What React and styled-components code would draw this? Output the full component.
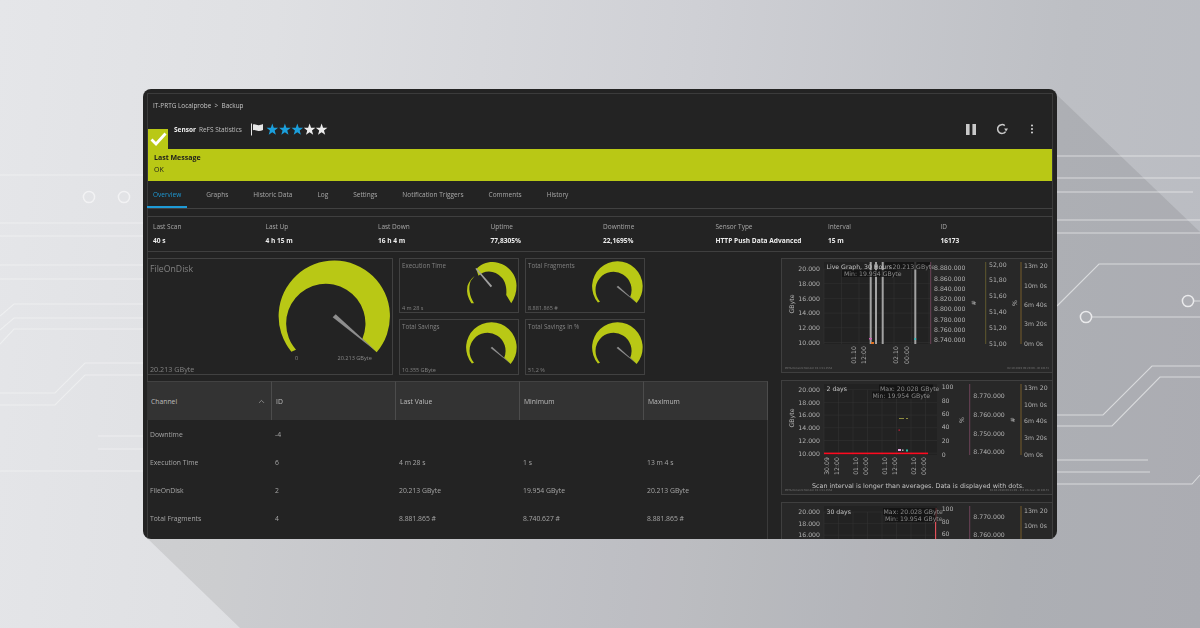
import React from "react";
import styled, { createGlobalStyle } from "styled-components";
import { EllipsisVertical, ChevronUp } from "lucide-react";

const Global = createGlobalStyle`
  html, body { margin: 0; padding: 0; background: #d0d1d5; }
  * { box-sizing: border-box; }
`;

const Stage = styled.div`
  position: relative;
  width: 1200px;
  height: 628px;
  padding: 89px 143px;
  overflow: hidden;
  background: linear-gradient(96deg, #e5e6e9 0%, #dfe0e3 22%, #cfd0d5 55%, #bdbfc4 85%, #babcc2 100%);
  font-family: "Open Sans", "Noto Sans", sans-serif;
`;

const Backdrop = styled.svg`
  position: absolute;
  inset: 0;
`;

const Window = styled.main`
  position: relative;
  width: 914px;
  height: 450px;
  padding: 4px 4px 0;
  overflow: hidden;
  background: #232323;
  border-radius: 8px;
  color: #b5b5b5;
  font-size: 7px;
  filter: blur(0.3px);
`;

const Frame = styled.div`
  width: 906px;
  border: 1px solid #3b3b3b;
  border-bottom: 0;
`;

const Breadcrumb = styled.div`
  height: 22px;
  padding-left: 5px;
  display: flex;
  align-items: center;
  color: #c4c4c4;
  font-size: 6.4px;
`;

const HeaderRow = styled.header`
  display: flex;
  height: 33px;
  align-items: flex-end;
`;

const CheckBadge = styled.div`
  width: 20px;
  height: 20px;
  margin-right: 6px;
  background: #b9c815;
  display: flex;
  align-items: center;
  justify-content: center;
`;

const TitleGroup = styled.div`
  align-self: flex-start;
  height: 26px;
  display: flex;
  align-items: center;
  font-size: 6.5px;
  color: #bdbdbd;
`;

const SensorWord = styled.b`
  color: #f0f0f0;
  margin-right: 3px;
`;

const FlagIcon = styled.svg`
  margin-left: 9px;
  margin-right: 3px;
`;

const Stars = styled.svg`
  display: block;
`;

const Actions = styled.div`
  margin-left: auto;
  align-self: flex-start;
  height: 26px;
  display: flex;
  align-items: center;
  padding-right: 14px;
  color: #c9c9c9;
`;

const PauseIcon = styled.svg`
  margin-right: 20px;
`;

const MoreIcon = styled(EllipsisVertical)`
  margin-left: 18px;
`;

const Banner = styled.section`
  height: 32px;
  padding: 3px 6px 0;
  background: #b9c815;
  color: #1d1d1d;
  line-height: 12px;
  font-size: 7px;
`;

const BannerTitle = styled.div`
  font-weight: 700;
`;

const Tabs = styled.nav`
  height: 28px;
  margin: 0 -1px;
  display: flex;
  gap: 13px;
  border-bottom: 1px solid #414141;
`;

const Tab = styled.div`
  height: 27px;
  padding: 2px 6px 0;
  display: flex;
  align-items: center;
  font-size: 6.5px;
  color: ${(p) => (p.$active ? "#1e9ad6" : "#a9a9a9")};
  border-bottom: 2px solid ${(p) => (p.$active ? "#1e9ad6" : "transparent")};
`;

const Stats = styled.section`
  height: 36px;
  margin: 7px -1px 0;
  padding: 0 5px;
  display: grid;
  grid-template-columns: repeat(8, 112.5px);
  align-content: center;
  border: 1px solid #3f3f3f;
`;

const Stat = styled.div`
  display: flex;
  flex-direction: column;
  gap: 2px;
  line-height: 12px;
`;

const StatLabel = styled.span`
  color: #a8a8a8;
  font-size: 6.5px;
`;

const StatValue = styled.span`
  color: #ececec;
  font-weight: 700;
  font-size: 6.6px;
`;

const Main = styled.div`
  display: flex;
  gap: 13px;
  margin: 6px -1px 0;
`;

const LeftColumn = styled.div`
  width: 621px;
`;

const GaugeRow = styled.div`
  display: flex;
  gap: 6px;
`;

const GaugeGrid = styled.div`
  display: grid;
  grid-template-columns: 120px 120px;
  grid-template-rows: 55px 56px;
  gap: 6px;
`;

const GaugePanel = styled.div`
  width: ${(p) => (p.$big ? "246px" : "120px")};
  height: ${(p) => (p.$big ? "117px" : "auto")};
  border: 1px solid #414141;
  display: flex;
  justify-content: space-between;
  padding: ${(p) => (p.$big ? "1px 1.6px 0 0" : "2px 1.4px 0 0")};
`;

const GaugeText = styled.div`
  display: flex;
  flex-direction: column;
  justify-content: space-between;
  padding: ${(p) => (p.$big ? "3px 0 0 2px" : "0 0 0 2px")};
  color: #828282;
  white-space: nowrap;
`;

const GaugeTitle = styled.span`
  font-size: ${(p) => (p.$big ? "8.7px" : "6.2px")};
  line-height: ${(p) => (p.$big ? "13px" : "10px")};
`;

const GaugeValue = styled.span`
  font-size: ${(p) => (p.$big ? "7.2px" : "5.5px")};
  line-height: ${(p) => (p.$big ? "10px" : "8px")};
`;

const GaugeSvg = styled.svg`
  display: block;
  flex-shrink: 0;
`;

const GaugeLabel = styled.text`
  font-family: "Open Sans", sans-serif;
  font-size: 16.7px;
  fill: #8a8a8a;
  text-anchor: middle;
`;

const Table = styled.div`
  margin-top: 6px;
  display: grid;
  grid-template-columns: 125px 124px 124px 124px 124px;
  grid-template-rows: 39px repeat(4, 28px);
  align-content: start;
  border-right: 1px solid #3a3a3a;
  height: 160px;
`;

const HeadCell = styled.div`
  padding: 0 5px 0 4px;
  display: flex;
  align-items: center;
  justify-content: space-between;
  background: #333333;
  border-top: 1px solid #424242;
  border-right: 1px solid #4c4c4c;
  color: #bdbdbd;
  font-size: 6.8px;
`;

const Cell = styled.div`
  padding: 0 0 0 3px;
  display: flex;
  align-items: center;
  font-size: 6.8px;
  color: #a6a6a6;
`;

const RightColumn = styled.aside`
  width: 272px;
  display: flex;
  flex-direction: column;
  gap: 7px;
`;

const ChartPanel = styled.div`
  height: ${(p) => (p.$clipped ? "37px" : "115px")};
  border: 1px solid #3f3f3f;
  border-bottom-width: ${(p) => (p.$clipped ? "0" : "1px")};
  background: #282828;
  flex-shrink: 0;
  overflow: hidden;
`;

const ChartSvg = styled.svg`
  display: block;
  font-family: "DejaVu Sans", sans-serif;
`;

const AxisText = styled.text`
  font-size: 6.2px;
  fill: #b2b2b2;
  text-anchor: ${(p) => p.$anchor || "start"};
`;

const CaptionText = styled.text`
  font-size: 6.2px;
  fill: #c4c4c4;
`;

const OverlayText = styled.text`
  font-size: 6.2px;
  fill: #8b8b8b;
`;

const FootText = styled.text`
  font-size: 2.6px;
  fill: #777;
  text-anchor: ${(p) => p.$anchor || "start"};
`;

const NoteText = styled.text`
  font-size: 6.4px;
  fill: #c4c4c4;
  text-anchor: middle;
`;

const TRACE = "#f4f5f6";

function BackdropArt() {
  const lines = [
    "M0 175H143", "M0 223H143", "M0 236H143", "M0 265H143", "M0 279H143",
    "M0 316L14 304H143", "M0 330L14 318H143", "M0 344L14 329H143",
    "M0 393H55L85 363H143", "M0 405H55L85 375H143",
    "M98 436H143", "M98 449H143", "M0 471H143",
    "M1057 156H1200", "M1057 178H1200", "M1057 192H1193", "M1057 220H1200", "M1057 233H1200",
    "M1057 306L1099 264H1200", "M1194 301H1200", "M1092 317H1200",
    "M1057 415H1103L1152 366H1200", "M1057 426H1112L1160 377H1200",
    "M1057 460H1148", "M1057 472H1150", "M1057 484H1192L1200 475",
  ];
  return (
    <Backdrop width="1200" height="628" viewBox="0 0 1200 628">
      <polygon points="148,539 240,628 1200,628 1200,232 1057,95" fill="#25262a" opacity="0.1" />
      <g fill="none" stroke={TRACE} strokeOpacity="0.62" strokeWidth="1.1">
        {lines.map((d) => <path key={d} d={d} />)}
        <g strokeWidth="1.5" strokeOpacity="0.85">
          <circle cx="89" cy="197" r="5.6" />
          <circle cx="124" cy="197" r="5.6" />
          <circle cx="1188" cy="301" r="5.6" />
          <circle cx="1086" cy="317" r="5.6" />
        </g>
      </g>
    </Backdrop>
  );
}

function Star({ x, color }) {
  const pts = [];
  for (let i = 0; i < 10; i++) {
    const r = i % 2 ? 2.5 : 6.1;
    const a = (Math.PI / 5) * i - Math.PI / 2;
    pts.push(`${(x + r * Math.cos(a)).toFixed(2)},${(6.7 + r * Math.sin(a)).toFixed(2)}`);
  }
  return <polygon points={pts.join(" ")} fill={color} />;
}

const GAUGE_GREEN = "#b9c815";

function Gauge({ big, min, max, partial }) {
  const w = big ? 116.67 : 53;
  const h = big ? 105.33 : 47.84;
  return (
    <GaugeSvg width={w} height={h} viewBox="0 8 350 316">
      {partial ? (
        <>
          <path fill={GAUGE_GREEN} d="M48 287C25 250 15 215 22 180C24 160 45 125 70 107L44 140C35 165 33 190 37 210C40 240 52 265 66 287Z" />
          <path fill={GAUGE_GREEN} d="M81 62C110 30 150 14 191 15C280 20 347 90 347 170C347 215 335 255 312 287L279 232C285 180 270 140 250 118C225 92 195 78 165 78C135 78 110 92 96 106Z" />
          <polygon fill="#a0a0a0" points="75,60 82,54 186,173 176,181" />
        </>
      ) : (
        <>
          <path fill={GAUGE_GREEN} d="M52 283A167 167 0 1 1 308 285L265 245A119 119 0 1 0 66 277Z" />
          <polygon fill="#8e8e8e" points="176,180 185,171 309,284" />
        </>
      )}
      {min && <GaugeLabel x="68" y="309">{min}</GaugeLabel>}
      {max && <GaugeLabel x="242" y="309">{max}</GaugeLabel>}
    </GaugeSvg>
  );
}

function Grid({ x0, x1, y0, y1, stepX, stepY }) {
  const v = [];
  for (let x = x0; x < x1; x += stepX) v.push(x);
  const h = [];
  for (let y = y0; y < y1; y += stepY) h.push(y);
  return (
    <g stroke="#343434" strokeWidth="0.5">
      {v.map((x) => <line key={x} x1={x} x2={x} y1={y0} y2={y1} />)}
      {h.map((y) => <line key={y} x1={x0} x2={x1} y1={y} y2={y} />)}
    </g>
  );
}

const Axis = ({ x, y0, y1, color }) => <line x1={x} x2={x} y1={y0} y2={y1} stroke={color} strokeWidth="0.8" />;

const Rot = ({ x, y, children }) => (
  <AxisText $anchor="middle" transform={`rotate(-90 ${x} ${y})`} x={x} y={y}>{children}</AxisText>
);

const Labels = ({ x, ys, items, anchor }) =>
  items.map((t, i) => <AxisText key={t + i} x={x} y={ys[i] + 2.2} $anchor={anchor}>{t}</AxisText>);

const G_LABELS = ["20.000", "18.000", "16.000", "14.000", "12.000", "10.000"];
const T_LABELS = ["13m 20", "10m 0s", "6m 40s", "3m 20s", "0m 0s"];
const PCT = ["100", "80", "60", "40", "20", "0"];
const F_LABELS = ["8.770.000", "8.760.000", "8.750.000", "8.740.000"];

const Foot = ({ left, right, y }) => (
  <>
    <FootText x="785" y={y}>{left}</FootText>
    <FootText x="1049" y={y} $anchor="end">{right}</FootText>
  </>
);

function ChartOne() {
  const bars = [870.7, 876, 882.7, 915.3];
  return (
    <ChartSvg width="270" height="113" viewBox="782 260 270 113">
      <rect x="824" y="263" width="106" height="82" fill="#222" />
      <Grid x0={824} x1={930} y0={270} y1={345} stepX={17.5} stepY={14.7} />
      <Labels x={820} anchor="end" ys={[270, 284.7, 299.3, 314, 328.7, 343.3]} items={G_LABELS} />
      <Rot x={794} y={305}>GByte</Rot>
      {bars.map((x) => <rect key={x} x={x - 1} y="263" width="2" height="82" fill="#a2a2a2" />)}
      <rect x="869" y="339" width="3" height="1.4" fill="#d45fb6" />
      <rect x="871" y="343" width="3" height="2" fill="#e0701f" />
      <rect x="914.5" y="339" width="1.6" height="2" fill="#27c4c4" />
      <Axis x={930.7} y0={263} y1={345} color="#7d4a63" />
      <Labels x={934} ys={[269, 279.3, 289.6, 299.9, 310.2, 320.5, 330.8, 341]} items={["8.880.000", "8.860.000", "8.840.000", "8.820.000", "8.800.000", "8.780.000", "8.760.000", "8.740.000"]} />
      <Rot x={976} y={304}>#</Rot>
      <Axis x={985.7} y0={263} y1={345} color="#6f6530" />
      <Labels x={989} ys={[265.3, 280.7, 297, 312.7, 328.3, 344.3]} items={["52,00", "51,80", "51,60", "51,40", "51,20", "51,00"]} />
      <Rot x={1017} y={304}>%</Rot>
      <Axis x={1021} y0={263} y1={345} color="#8a6a2c" />
      <Labels x={1024} ys={[267, 286.3, 305.3, 325, 344.3]} items={T_LABELS} />
      <rect x="885" y="263" width="45" height="7.5" fill="#111" opacity="0.75" />
      <rect x="842" y="271" width="55" height="7" fill="#111" opacity="0.75" />
      <OverlayText x="892.5" y="270">20.213 GByte</OverlayText>
      <OverlayText x="844" y="277">Min: 19.954 GByte</OverlayText>
      <CaptionText x="826.5" y="270">Live Graph, 30 Hours</CaptionText>
      <Rot x={855.5} y={356}>01.10</Rot>
      <Rot x={865.5} y={356}>12:00</Rot>
      <Rot x={898} y={356}>02.10</Rot>
      <Rot x={909} y={356}>00:00</Rot>
      <Foot y={369.5} left="PRTG Network Monitor 19.3.51.2554" right="02.10.2019 09:20:09 - ID 16173" />
    </ChartSvg>
  );
}

function ChartTwo() {
  const xl = [["30.09", 829], ["12:00", 839], ["01.10", 858], ["00:00", 868], ["01.10", 887], ["12:00", 897], ["02.10", 916], ["00:00", 926]];
  return (
    <ChartSvg width="270" height="113" viewBox="782 381 270 113">
      <rect x="824" y="384" width="113" height="71" fill="#222" />
      <Grid x0={824} x1={937} y0={389.7} y1={455} stepX={14.5} stepY={12.7} />
      <Labels x={820} anchor="end" ys={[389.7, 402.7, 415, 428, 441, 453.3]} items={G_LABELS} />
      <Rot x={794} y={418}>GByte</Rot>
      <rect x="824" y="452.6" width="104" height="1.6" fill="#ff0a20" />
      <rect x="899" y="418" width="5" height="0.9" fill="#9c9a45" />
      <rect x="906" y="418" width="2" height="0.9" fill="#9c9a45" />
      <rect x="898.5" y="429.5" width="1.4" height="1.2" fill="#d91d3a" />
      <rect x="898" y="449" width="3" height="2" fill="#e6a6e6" />
      <rect x="902" y="449.5" width="1.5" height="1.4" fill="#bbb" />
      <rect x="906" y="449.5" width="2" height="2" fill="#27c4a8" />
      <Axis x={969.7} y0={384} y1={455} color="#7d4a63" />
      <Labels x={941.7} ys={[386.3, 400.3, 414, 427, 440.7, 454.3]} items={PCT} />
      <Rot x={964} y={420}>%</Rot>
      <Labels x={973.3} ys={[395.7, 414.3, 433.3, 452]} items={F_LABELS} />
      <Rot x={1015} y={420}>#</Rot>
      <Axis x={1021} y0={384} y1={455} color="#8a6a2c" />
      <Labels x={1024} ys={[387.7, 404.7, 421, 438, 454.3]} items={T_LABELS} />
      <rect x="879" y="384.5" width="54" height="7" fill="#111" opacity="0.8" />
      <rect x="872" y="391.5" width="53" height="7" fill="#111" opacity="0.8" />
      <OverlayText x="880" y="390.5">Max: 20.028 GByte</OverlayText>
      <OverlayText x="872.5" y="397.5">Min: 19.954 GByte</OverlayText>
      <CaptionText x="826.5" y="391">2 days</CaptionText>
      {xl.map(([t, x], i) => <Rot key={i} x={x} y={466}>{t}</Rot>)}
      <Foot y={490.5} left="PRTG Network Monitor 19.3.51.2554" right="02.10.2019 09:21:09 - 2 d interval - ID 16173" />
      <NoteText x="918" y="488">Scan interval is longer than averages. Data is displayed with dots.</NoteText>
    </ChartSvg>
  );
}

function ChartThree() {
  return (
    <ChartSvg width="270" height="37" viewBox="782 502 270 37">
      <rect x="824" y="505" width="113" height="34" fill="#222" />
      <Grid x0={824} x1={937} y0={511} y1={539} stepX={14.5} stepY={11.6} />
      <Labels x={820} anchor="end" ys={[511, 522.3, 534]} items={G_LABELS.slice(0, 3)} />
      <rect x="935" y="507" width="1.2" height="32" fill="#e0505a" />
      <Axis x={969.7} y0={505} y1={539} color="#7d4a63" />
      <Labels x={941.7} ys={[507.7, 520.3, 532.7]} items={PCT.slice(0, 3)} />
      <Labels x={973.3} ys={[516, 533.3]} items={F_LABELS.slice(0, 2)} />
      <Axis x={1021} y0={505} y1={539} color="#8a6a2c" />
      <Labels x={1024} ys={[509.3, 524.7]} items={T_LABELS.slice(0, 2)} />
      <rect x="883" y="507" width="53" height="7" fill="#111" opacity="0.8" />
      <rect x="885" y="514" width="51" height="7" fill="#111" opacity="0.8" />
      <OverlayText x="883.5" y="513">Max: 20.028 GByte</OverlayText>
      <OverlayText x="885" y="520">Min: 19.954 GByte</OverlayText>
      <CaptionText x="826.5" y="513">30 days</CaptionText>
    </ChartSvg>
  );
}

const TABS = ["Overview", "Graphs", "Historic Data", "Log", "Settings", "Notification Triggers", "Comments", "History"];
const STATS = [
  ["Last Scan", "40 s"], ["Last Up", "4 h 15 m"], ["Last Down", "16 h 4 m"], ["Uptime", "77,8305%"],
  ["Downtime", "22,1695%"], ["Sensor Type", "HTTP Push Data Advanced"], ["Interval", "15 m"], ["ID", "16173"],
];
const HEADS = ["Channel", "ID", "Last Value", "Minimum", "Maximum"];
const ROWS = [
  ["Downtime", "-4", "", "", ""],
  ["Execution Time", "6", "4 m 28 s", "1 s", "13 m 4 s"],
  ["FileOnDisk", "2", "20.213 GByte", "19.954 GByte", "20.213 GByte"],
  ["Total Fragments", "4", "8.881.865 #", "8.740.627 #", "8.881.865 #"],
];
const SMALL = [
  ["Execution Time", "4 m 28 s", true],
  ["Total Fragments", "8.881.865 #", false],
  ["Total Savings", "10.355 GByte", false],
  ["Total Savings in %", "51,2 %", false],
];

export default function App() {
  return (
    <Stage>
      <Global />
      <BackdropArt />
      <Window>
        <Frame>
          <Breadcrumb>IT-PRTG Localprobe&nbsp;&nbsp;&gt;&nbsp;&nbsp;Backup</Breadcrumb>
          <HeaderRow>
            <CheckBadge>
              <svg width="17" height="14" viewBox="0 0 17 14">
                <polyline points="1.5,7.5 6,12 15.5,1.5" fill="none" stroke="#fff" strokeWidth="2.8" />
              </svg>
            </CheckBadge>
            <TitleGroup>
              <SensorWord>Sensor</SensorWord> ReFS Statistics
              <FlagIcon width="12" height="13" viewBox="0 0 12 13">
                <rect x="0" y="0.5" width="1" height="12" fill="#e6e6e6" />
                <path d="M2 1.5C4 0.5 5.5 2 7.5 2.2C9 2.3 10.5 1.5 12 1V7C10.5 7.6 9 8.2 7.5 8C5.5 7.8 4 6.5 2 7.3Z" fill="#e6e6e6" />
              </FlagIcon>
              <Stars width="62" height="13" viewBox="0 0 62 13">
                <Star x={6.3} color="#1b9fdc" />
                <Star x={18.9} color="#1b9fdc" />
                <Star x={31.3} color="#1b9fdc" />
                <Star x={43.6} color="#ececec" />
                <Star x={55.6} color="#ececec" />
              </Stars>
            </TitleGroup>
            <Actions>
              <PauseIcon width="10" height="11" viewBox="0 0 10 11">
                <rect width="3.6" height="11" fill="#c9c9c9" />
                <rect x="6.4" width="3.6" height="11" fill="#c9c9c9" />
              </PauseIcon>
              <svg width="12" height="12" viewBox="0 0 12 12">
                <path d="M8.8 2.6A4.4 4.4 0 1 0 9.6 8.6" fill="none" stroke="#c9c9c9" strokeWidth="1.5" />
                <polygon points="8.2,5.6 12,5.6 10.1,8.4" fill="#c9c9c9" />
              </svg>
              <MoreIcon size={12} strokeWidth={2.4} />
            </Actions>
          </HeaderRow>
          <Banner>
            <BannerTitle>Last Message</BannerTitle>
            <div>OK</div>
          </Banner>
          <Tabs>
            {TABS.map((t, i) => <Tab key={t} $active={i === 0}>{t}</Tab>)}
          </Tabs>
          <Stats>
            {STATS.map(([l, v]) => (
              <Stat key={l}>
                <StatLabel>{l}</StatLabel>
                <StatValue>{v}</StatValue>
              </Stat>
            ))}
          </Stats>
          <Main>
            <LeftColumn>
              <GaugeRow>
                <GaugePanel $big>
                  <GaugeText $big>
                    <GaugeTitle $big>FileOnDisk</GaugeTitle>
                    <GaugeValue $big>20.213 GByte</GaugeValue>
                  </GaugeText>
                  <Gauge big min="0" max="20.213 GByte" />
                </GaugePanel>
                <GaugeGrid>
                  {SMALL.map(([t, v, partial]) => (
                    <GaugePanel key={t}>
                      <GaugeText>
                        <GaugeTitle>{t}</GaugeTitle>
                        <GaugeValue>{v}</GaugeValue>
                      </GaugeText>
                      <Gauge partial={partial} />
                    </GaugePanel>
                  ))}
                </GaugeGrid>
              </GaugeRow>
              <Table>
                {HEADS.map((h, i) => (
                  <HeadCell key={h}>
                    {h}
                    {i === 0 && <ChevronUp size={9} strokeWidth={1.5} />}
                  </HeadCell>
                ))}
                {ROWS.flat().map((c, i) => <Cell key={i}>{c}</Cell>)}
              </Table>
            </LeftColumn>
            <RightColumn>
              <ChartPanel><ChartOne /></ChartPanel>
              <ChartPanel><ChartTwo /></ChartPanel>
              <ChartPanel $clipped><ChartThree /></ChartPanel>
            </RightColumn>
          </Main>
        </Frame>
      </Window>
    </Stage>
  );
}
